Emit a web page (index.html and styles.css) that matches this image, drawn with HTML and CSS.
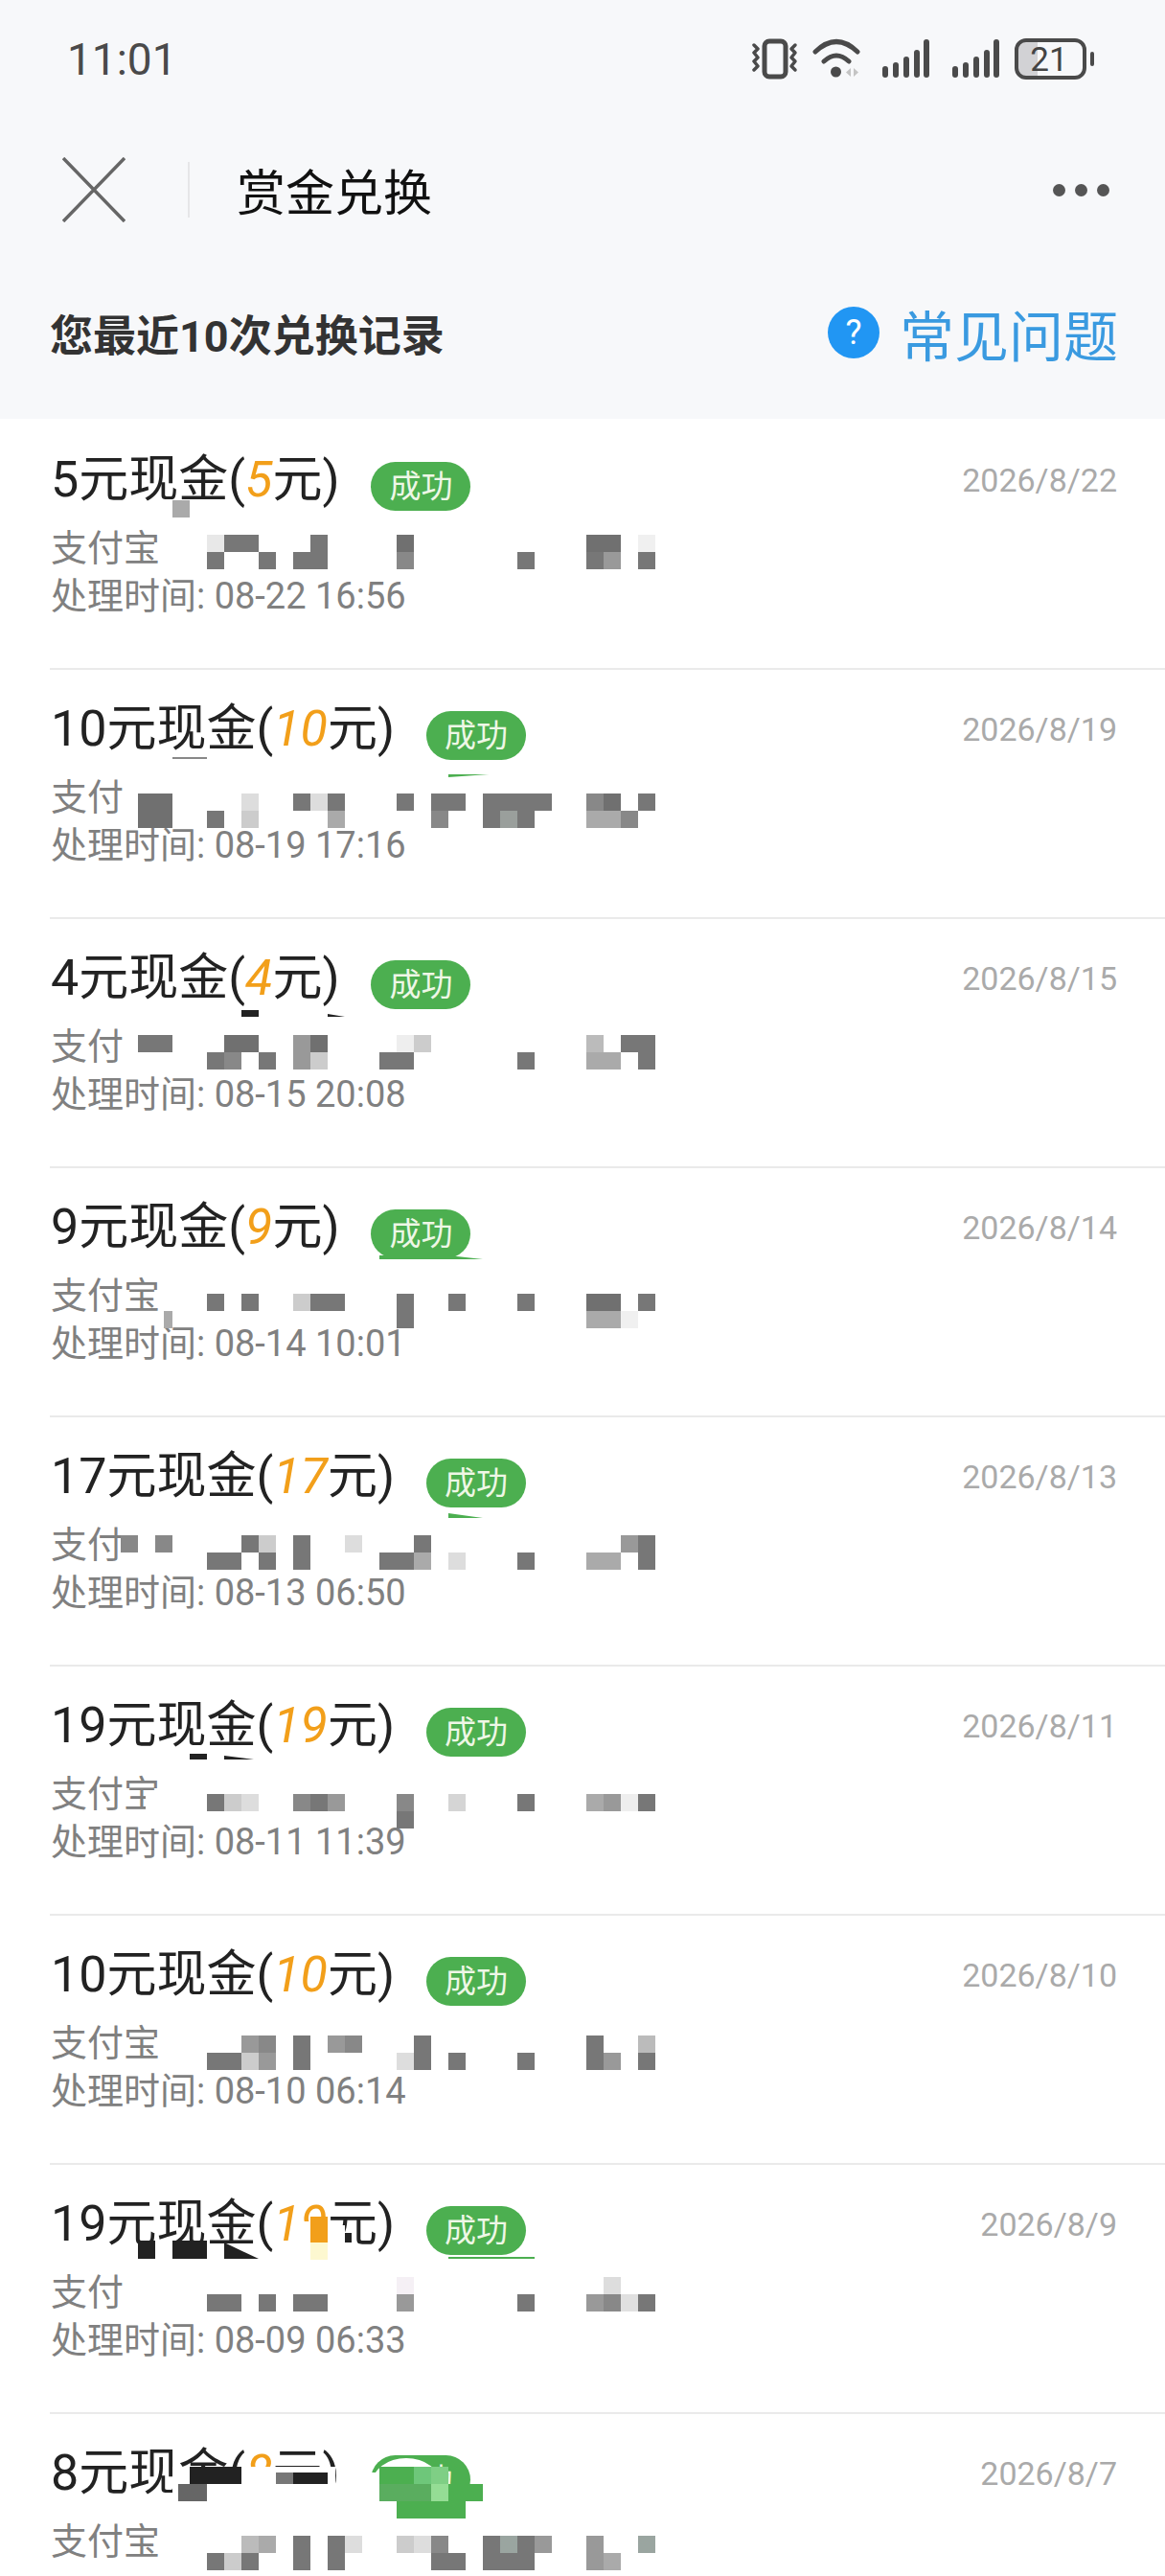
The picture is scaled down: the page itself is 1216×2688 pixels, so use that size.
FILE: index.html
```html
<!DOCTYPE html>
<html lang="zh-CN">
<head>
    <meta charset="UTF-8">
    <meta name="viewport" content="width=device-width, initial-scale=1.0">
    <title>赏金兑换</title>
    <link rel="stylesheet" href="styles.css">
</head>
<body>
<div class="page">
    <header class="top">
        <div class="status">
            <span class="time">11:01</span>
            <svg class="status-icons" width="357" height="44" viewBox="785 40 357 44">
                <g fill="none" stroke="#4a4a4a" stroke-linecap="round" stroke-linejoin="round">
                    <rect x="798" y="43" width="22" height="37" rx="5" stroke-width="5"/>
                    <path stroke-width="3.5" d="M787 47l4 4-4 4 4 5-4 4 4 5-4 4"/>
                    <path stroke-width="3.5" d="M830 47l-4 4 4 4-4 5 4 4-4 5 4 4"/>
                    <path stroke-width="5" d="M851 54Q873 33 895 54M860 64Q873 52 886 64"/>
                </g>
                <circle cx="872.500" cy="75" r="5.500" fill="#4a4a4a"/>
                <path fill="#c4c4c4" d="M888 71v9l-5-4.500zM891 71v9l5-4.500z"/>
                <g stroke="#4a4a4a" stroke-width="6" stroke-linecap="round">
                    <path d="M924 72v6M935 68v10M946 62v16M957 55v23M967 44v34"/>
                    <path d="M997 72v6M1008 68v10M1019 62v16M1030 55v23M1040 44v34"/>
                </g>
                <path fill="#d2d2d5" d="M1070 43h13v37h-13a9 9 0 0 1-9-9v-19a9 9 0 0 1 9-9z"/>
                <rect x="1061" y="42" width="71" height="39" rx="10" fill="none" stroke="#4a4a4a" stroke-width="4"/>
                <rect x="1138" y="54" width="4" height="15" rx="2" fill="#4a4a4a"/>
                <text class="battery-num" x="1095" y="74" text-anchor="middle">21</text>
            </svg>
        </div>
        <nav class="nav">
            <svg class="close" width="66" height="68" viewBox="0 0 66 68">
                <path d="M1 1L65 67M65 1L1 67" stroke="#666" stroke-width="3.500" fill="none"/>
            </svg>
            <span class="nav-line"></span>
            <h1 class="nav-title">赏金兑换</h1>
            <div class="dots"><i></i><i></i><i></i></div>
        </nav>
        <div class="section">
            <h2 class="section-title">您最近10次兑换记录</h2>
            <a class="help"><span class="help-icon">?</span>常见问题</a>
        </div>
    </header>

    <ul class="list">
        <li class="row">
            <div class="row-head"><span class="name">5元现金(<em>5</em>元)</span><span class="badge">成功</span><span class="date">2026/8/22</span></div>
            <p class="sub">支付宝</p>
            <p class="sub">处理时间: 08-22 16:56</p>
        </li>
        <li class="row">
            <div class="row-head"><span class="name">10元现金(<em>10</em>元)</span><span class="badge">成功</span><span class="date">2026/8/19</span></div>
            <p class="sub">支付</p>
            <p class="sub">处理时间: 08-19 17:16</p>
        </li>
        <li class="row">
            <div class="row-head"><span class="name">4元现金(<em>4</em>元)</span><span class="badge">成功</span><span class="date">2026/8/15</span></div>
            <p class="sub">支付</p>
            <p class="sub">处理时间: 08-15 20:08</p>
        </li>
        <li class="row">
            <div class="row-head"><span class="name">9元现金(<em>9</em>元)</span><span class="badge">成功</span><span class="date">2026/8/14</span></div>
            <p class="sub">支付宝</p>
            <p class="sub">处理时间: 08-14 10:01</p>
        </li>
        <li class="row">
            <div class="row-head"><span class="name">17元现金(<em>17</em>元)</span><span class="badge">成功</span><span class="date">2026/8/13</span></div>
            <p class="sub">支付</p>
            <p class="sub">处理时间: 08-13 06:50</p>
        </li>
        <li class="row">
            <div class="row-head"><span class="name">19元现金(<em>19</em>元)</span><span class="badge">成功</span><span class="date">2026/8/11</span></div>
            <p class="sub">支付宝</p>
            <p class="sub">处理时间: 08-11 11:39</p>
        </li>
        <li class="row">
            <div class="row-head"><span class="name">10元现金(<em>10</em>元)</span><span class="badge">成功</span><span class="date">2026/8/10</span></div>
            <p class="sub">支付宝</p>
            <p class="sub">处理时间: 08-10 06:14</p>
        </li>
        <li class="row">
            <div class="row-head"><span class="name">19元现金(<em>19</em>元)</span><span class="badge">成功</span><span class="date">2026/8/9</span></div>
            <p class="sub">支付</p>
            <p class="sub">处理时间: 08-09 06:33</p>
        </li>
        <li class="row">
            <div class="row-head"><span class="name">8元现金(<em>8</em>元)</span><span class="badge">成功</span><span class="date">2026/8/7</span></div>
            <p class="sub">支付宝</p>
        </li>
    </ul>

    <!-- mosaic over the account numbers, on an 18px grid -->
    <svg class="mosaic" width="1216" height="2688" viewBox="0 0 1216 2688">
        <g class="cells">
            <rect x="180" y="522" fill="#aaa"/>
            <rect x="216" y="558" fill="#e8e8e8"/><rect x="234" y="558" fill="#777"/><rect x="252" y="558" fill="#777"/><rect x="324" y="558" fill="#777"/><rect x="414" y="558" fill="#707070"/><rect x="612" y="558" fill="#707070"/><rect x="630" y="558" fill="#707070"/><rect x="666" y="558" fill="#f0f0f0"/>
            <rect x="216" y="576" fill="#777"/><rect x="270" y="576" fill="#777"/><rect x="306" y="576" fill="#777"/><rect x="324" y="576" fill="#777"/><rect x="414" y="576" fill="#888"/><rect x="540" y="576" fill="#777"/><rect x="612" y="576" fill="#777"/><rect x="630" y="576" fill="#999"/><rect x="666" y="576" fill="#777"/>

            <rect x="144" y="828" fill="#707070"/><rect x="162" y="828" fill="#707070"/><rect x="252" y="828" fill="#ddd"/><rect x="306" y="828" fill="#777"/><rect x="324" y="828" fill="#ddd"/><rect x="342" y="828" fill="#777"/><rect x="414" y="828" fill="#777"/><rect x="450" y="828" fill="#777"/><rect x="468" y="828" fill="#777"/><rect x="504" y="828" fill="#777"/><rect x="522" y="828" fill="#777"/><rect x="540" y="828" fill="#777"/><rect x="558" y="828" fill="#777"/><rect x="612" y="828" fill="#888"/><rect x="630" y="828" fill="#707070"/><rect x="666" y="828" fill="#777"/>
            <rect x="144" y="846" fill="#707070"/><rect x="162" y="846" fill="#707070"/><rect x="216" y="846" fill="#777"/><rect x="252" y="846" fill="#ccc"/><rect x="342" y="846" fill="#aaa"/><rect x="450" y="846" fill="#888"/><rect x="504" y="846" fill="#777"/><rect x="522" y="846" fill="#9a9f9c"/><rect x="540" y="846" fill="#777"/><rect x="612" y="846" fill="#aaa"/><rect x="630" y="846" fill="#aaa"/><rect x="648" y="846" fill="#888"/>

            <rect x="144" y="1080" fill="#777"/><rect x="162" y="1080" fill="#777"/><rect x="234" y="1080" fill="#707070"/><rect x="252" y="1080" fill="#707070"/><rect x="306" y="1080" fill="#999"/><rect x="324" y="1080" fill="#707070"/><rect x="414" y="1080" fill="#eee"/><rect x="432" y="1080" fill="#ccc"/><rect x="612" y="1080" fill="#bbb"/><rect x="648" y="1080" fill="#777"/><rect x="666" y="1080" fill="#777"/>
            <rect x="216" y="1098" fill="#777"/><rect x="234" y="1098" fill="#888"/><rect x="270" y="1098" fill="#777"/><rect x="306" y="1098" fill="#999"/><rect x="324" y="1098" fill="#ccc"/><rect x="396" y="1098" fill="#777"/><rect x="414" y="1098" fill="#777"/><rect x="540" y="1098" fill="#777"/><rect x="612" y="1098" fill="#aaa"/><rect x="630" y="1098" fill="#aaa"/><rect x="666" y="1098" fill="#777"/>

            <rect x="216" y="1350" fill="#777"/><rect x="252" y="1350" fill="#777"/><rect x="306" y="1350" fill="#ccc"/><rect x="324" y="1350" fill="#777"/><rect x="342" y="1350" fill="#777"/><rect x="414" y="1350" fill="#777"/><rect x="468" y="1350" fill="#777"/><rect x="540" y="1350" fill="#777"/><rect x="612" y="1350" fill="#707070"/><rect x="630" y="1350" fill="#707070"/><rect x="666" y="1350" fill="#777"/>
            <rect x="414" y="1368" fill="#777"/><rect x="612" y="1368" fill="#aaa"/><rect x="630" y="1368" fill="#aaa"/><rect x="648" y="1368" fill="#f0f0f0"/>

            <rect x="126" y="1602" fill="#888"/><rect x="162" y="1602" fill="#888"/><rect x="252" y="1602" fill="#777"/><rect x="270" y="1602" fill="#ccc"/><rect x="306" y="1602" fill="#777"/><rect x="360" y="1602" fill="#ddd"/><rect x="432" y="1602" fill="#777"/><rect x="648" y="1602" fill="#999"/><rect x="666" y="1602" fill="#777"/>
            <rect x="216" y="1620" fill="#777"/><rect x="234" y="1620" fill="#777"/><rect x="270" y="1620" fill="#777"/><rect x="306" y="1620" fill="#777"/><rect x="396" y="1620" fill="#777"/><rect x="414" y="1620" fill="#777"/><rect x="432" y="1620" fill="#aaa"/><rect x="468" y="1620" fill="#ddd"/><rect x="540" y="1620" fill="#777"/><rect x="612" y="1620" fill="#aaa"/><rect x="630" y="1620" fill="#aaa"/><rect x="666" y="1620" fill="#777"/>

            <rect x="216" y="1872" fill="#777"/><rect x="234" y="1872" fill="#ccc"/><rect x="252" y="1872" fill="#ddd"/><rect x="306" y="1872" fill="#888"/><rect x="324" y="1872" fill="#777"/><rect x="342" y="1872" fill="#999"/><rect x="414" y="1872" fill="#888"/><rect x="468" y="1872" fill="#d5d5d5"/><rect x="540" y="1872" fill="#777"/><rect x="612" y="1872" fill="#aaa"/><rect x="630" y="1872" fill="#999"/><rect x="648" y="1872" fill="#eee"/><rect x="666" y="1872" fill="#777"/>
            <rect x="414" y="1890" fill="#777"/>

            <rect x="252" y="2124" fill="#999"/><rect x="270" y="2124" fill="#888"/><rect x="306" y="2124" fill="#777"/><rect x="342" y="2124" fill="#999"/><rect x="360" y="2124" fill="#888"/><rect x="432" y="2124" fill="#777"/><rect x="612" y="2124" fill="#777"/><rect x="666" y="2124" fill="#bbb"/>
            <rect x="216" y="2142" fill="#777"/><rect x="234" y="2142" fill="#777"/><rect x="252" y="2142" fill="#ccc"/><rect x="270" y="2142" fill="#999"/><rect x="306" y="2142" fill="#777"/><rect x="414" y="2142" fill="#ddd"/><rect x="432" y="2142" fill="#777"/><rect x="468" y="2142" fill="#777"/><rect x="540" y="2142" fill="#777"/><rect x="612" y="2142" fill="#777"/><rect x="630" y="2142" fill="#999"/><rect x="666" y="2142" fill="#777"/>

            <rect x="414" y="2376" fill="#f5f0f5"/><rect x="630" y="2376" fill="#ddd"/>
            <rect x="216" y="2394" fill="#777"/><rect x="234" y="2394" fill="#777"/><rect x="270" y="2394" fill="#777"/><rect x="306" y="2394" fill="#777"/><rect x="324" y="2394" fill="#777"/><rect x="414" y="2394" fill="#999"/><rect x="540" y="2394" fill="#777"/><rect x="612" y="2394" fill="#999"/><rect x="630" y="2394" fill="#888"/><rect x="648" y="2394" fill="#e0e0e0"/><rect x="666" y="2394" fill="#777"/>

            <rect x="252" y="2646" fill="#bbb"/><rect x="270" y="2646" fill="#aaa"/><rect x="306" y="2646" fill="#777"/><rect x="342" y="2646" fill="#777"/><rect x="360" y="2646" fill="#ddd"/><rect x="414" y="2646" fill="#ccc"/><rect x="432" y="2646" fill="#ddd"/><rect x="450" y="2646" fill="#888"/><rect x="504" y="2646" fill="#777"/><rect x="522" y="2646" fill="#9aa5a0"/><rect x="540" y="2646" fill="#777"/><rect x="558" y="2646" fill="#999"/><rect x="612" y="2646" fill="#999"/><rect x="666" y="2646" fill="#9aa5a0"/>
            <rect x="216" y="2664" fill="#777"/><rect x="234" y="2664" fill="#ccc"/><rect x="252" y="2664" fill="#777"/><rect x="306" y="2664" fill="#777"/><rect x="342" y="2664" fill="#777"/><rect x="450" y="2664" fill="#777"/><rect x="468" y="2664" fill="#777"/><rect x="504" y="2664" fill="#777"/><rect x="522" y="2664" fill="#777"/><rect x="540" y="2664" fill="#777"/><rect x="612" y="2664" fill="#999"/><rect x="630" y="2664" fill="#aaa"/>
        </g>

        <!-- stray bits that leaked onto the titles -->
        <rect x="180" y="790" width="36" height="2" fill="#888"/>
        <path fill="#4caf50" d="M468 808h42l-42 3z"/>
        <path fill="#222" d="M252 1054h18v7h-18zM342 1058l18 3h-18z"/>
        <path fill="#4caf50" d="M396 1310h72l36 4h-108z"/>
        <path fill="#4caf50" d="M468 1579l36 5h-36z"/>
        <path fill="#222" d="M198 1830h18v6h-18zM234 1832l31 4h-31z"/>
        <rect x="171" y="1368" width="9" height="18" fill="#aaa"/>
        <rect x="152" y="1872" width="18" height="36" fill="#fff"/>

        <rect x="312" y="2318" width="12" height="22" fill="#fff"/>
        <rect x="342" y="2322" width="18" height="22" fill="#fff"/>
        <rect x="324" y="2313" width="18" height="27" fill="#f29f1a"/>
        <rect x="324" y="2340" width="18" height="18" fill="#fdf8d0"/>
        <path fill="#222" d="M144 2338h18v19h-18zM180 2338h36v19h-36zM234 2340l36 17h-36zM360 2330h7v10h-7z"/>
        <path fill="#4caf50" d="M468 2355h90v2h-90z"/>

        <rect x="180" y="2574" width="170" height="56" fill="#fff"/>
        <path fill="#222" d="M198 2574h54v18h-54zM306 2580h36v12h-36z"/>
        <rect x="288" y="2580" width="18" height="12" fill="#777"/>
        <rect x="186" y="2592" width="30" height="18" fill="#666"/>
        <ellipse cx="424" cy="2592" rx="36" ry="27" fill="#fff"/>
        <rect x="380" y="2580" width="16" height="40" fill="#fff"/>
        <rect x="396" y="2612" width="96" height="4" fill="#fff"/>
        <g class="cells">
            <rect x="396" y="2574" fill="#4caf50"/><rect x="414" y="2574" fill="#4caf50"/><rect x="432" y="2574" fill="#6ec77a"/><rect x="450" y="2574" fill="#7fcf85"/>
            <rect x="396" y="2592" fill="#5aad5f"/><rect x="414" y="2592" fill="#5aad5f"/><rect x="432" y="2592" fill="#5aad5f"/><rect x="450" y="2592" fill="#95dd95"/><rect x="468" y="2592" fill="#4caf50"/><rect x="486" y="2592" fill="#4caf50"/>
            <rect x="414" y="2610" fill="#4caf50"/><rect x="432" y="2610" fill="#4caf50"/><rect x="450" y="2610" fill="#4caf50"/><rect x="468" y="2610" fill="#4caf50"/>
        </g>
    </svg>
</div>
</body>
</html>
```

FILE: styles.css
```css
* {
    box-sizing: border-box;
}
body {
    margin: 0;
    font-family: Roboto, "Noto Sans CJK SC", sans-serif;
    background: #fff;
}
h1, h2, p, ul {
    margin: 0;
    padding: 0;
    font-weight: normal;
}
.page {
    position: relative;
    width: 1216px;
    height: 2688px;
    overflow: hidden;
}
.top {
    height: 437px;
    background: #f7f8fa;
}

.status {
    height: 124px;
    display: flex;
    align-items: center;
    justify-content: space-between;
    padding: 0 74px 0 70px;
}
.time {
    font-size: 46px;
    color: #4a4a4a;
}
.status-icons {
    display: block;
}
.battery-num {
    font-family: Roboto, sans-serif;
    font-size: 35px;
    fill: #444;
}

.nav {
    height: 148px;
    display: flex;
    align-items: center;
    padding-left: 65px;
}
.nav-line {
    width: 2px;
    height: 58px;
    margin: 0 49px 0 65px;
    background: #e6e6e8;
}
.nav-title {
    font-size: 51px;
    color: #111;
}
.dots {
    display: flex;
    gap: 10px;
    margin-left: auto;
    margin-right: 58px;
}
.dots i {
    width: 13px;
    height: 13px;
    border-radius: 50%;
    background: #555;
}

.section {
    height: 150px;
    display: flex;
    align-items: center;
    justify-content: space-between;
    padding: 0 49px 0 52px;
}
.section-title {
    font-size: 45px;
    font-weight: bold;
    color: #333;
}
.help {
    display: flex;
    align-items: center;
    gap: 21px;
    font-size: 57px;
    color: #3a9ae0;
}
.help-icon {
    width: 54px;
    height: 54px;
    border-radius: 50%;
    background: #2196f3;
    color: #fff;
    font-size: 36px;
    line-height: 54px;
    text-align: center;
}

.list {
    list-style: none;
    padding-top: 2px;
}
.row {
    height: 260px;
    margin-left: 52px;
    padding: 32px 50px 0 1px;
    border-bottom: 2px solid #eaeaea;
}
.row-head {
    display: flex;
    align-items: flex-start;
    height: 60px;
}
.name {
    font-size: 52px;
    line-height: 60px;
    color: #222;
    white-space: nowrap;
}
.name em {
    color: #f29f1a;
}
.badge {
    width: 104px;
    height: 51px;
    margin: 11px 0 0 33px;
    border-radius: 26px;
    background: #4caf50;
    color: #eef7e6;
    font-size: 33px;
    line-height: 51px;
    text-align: center;
}
.date {
    margin-left: auto;
    font-size: 34px;
    line-height: 60px;
    color: #aaa;
}
.sub {
    height: 66px;
    padding-top: 16px;
    font-size: 38px;
    line-height: 50px;
    color: #808080;
}
.sub + .sub {
    padding-top: 0;
}

.mosaic {
    position: absolute;
    left: 0;
    top: 0;
}
.cells rect {
    width: 18px;
    height: 18px;
}
```
